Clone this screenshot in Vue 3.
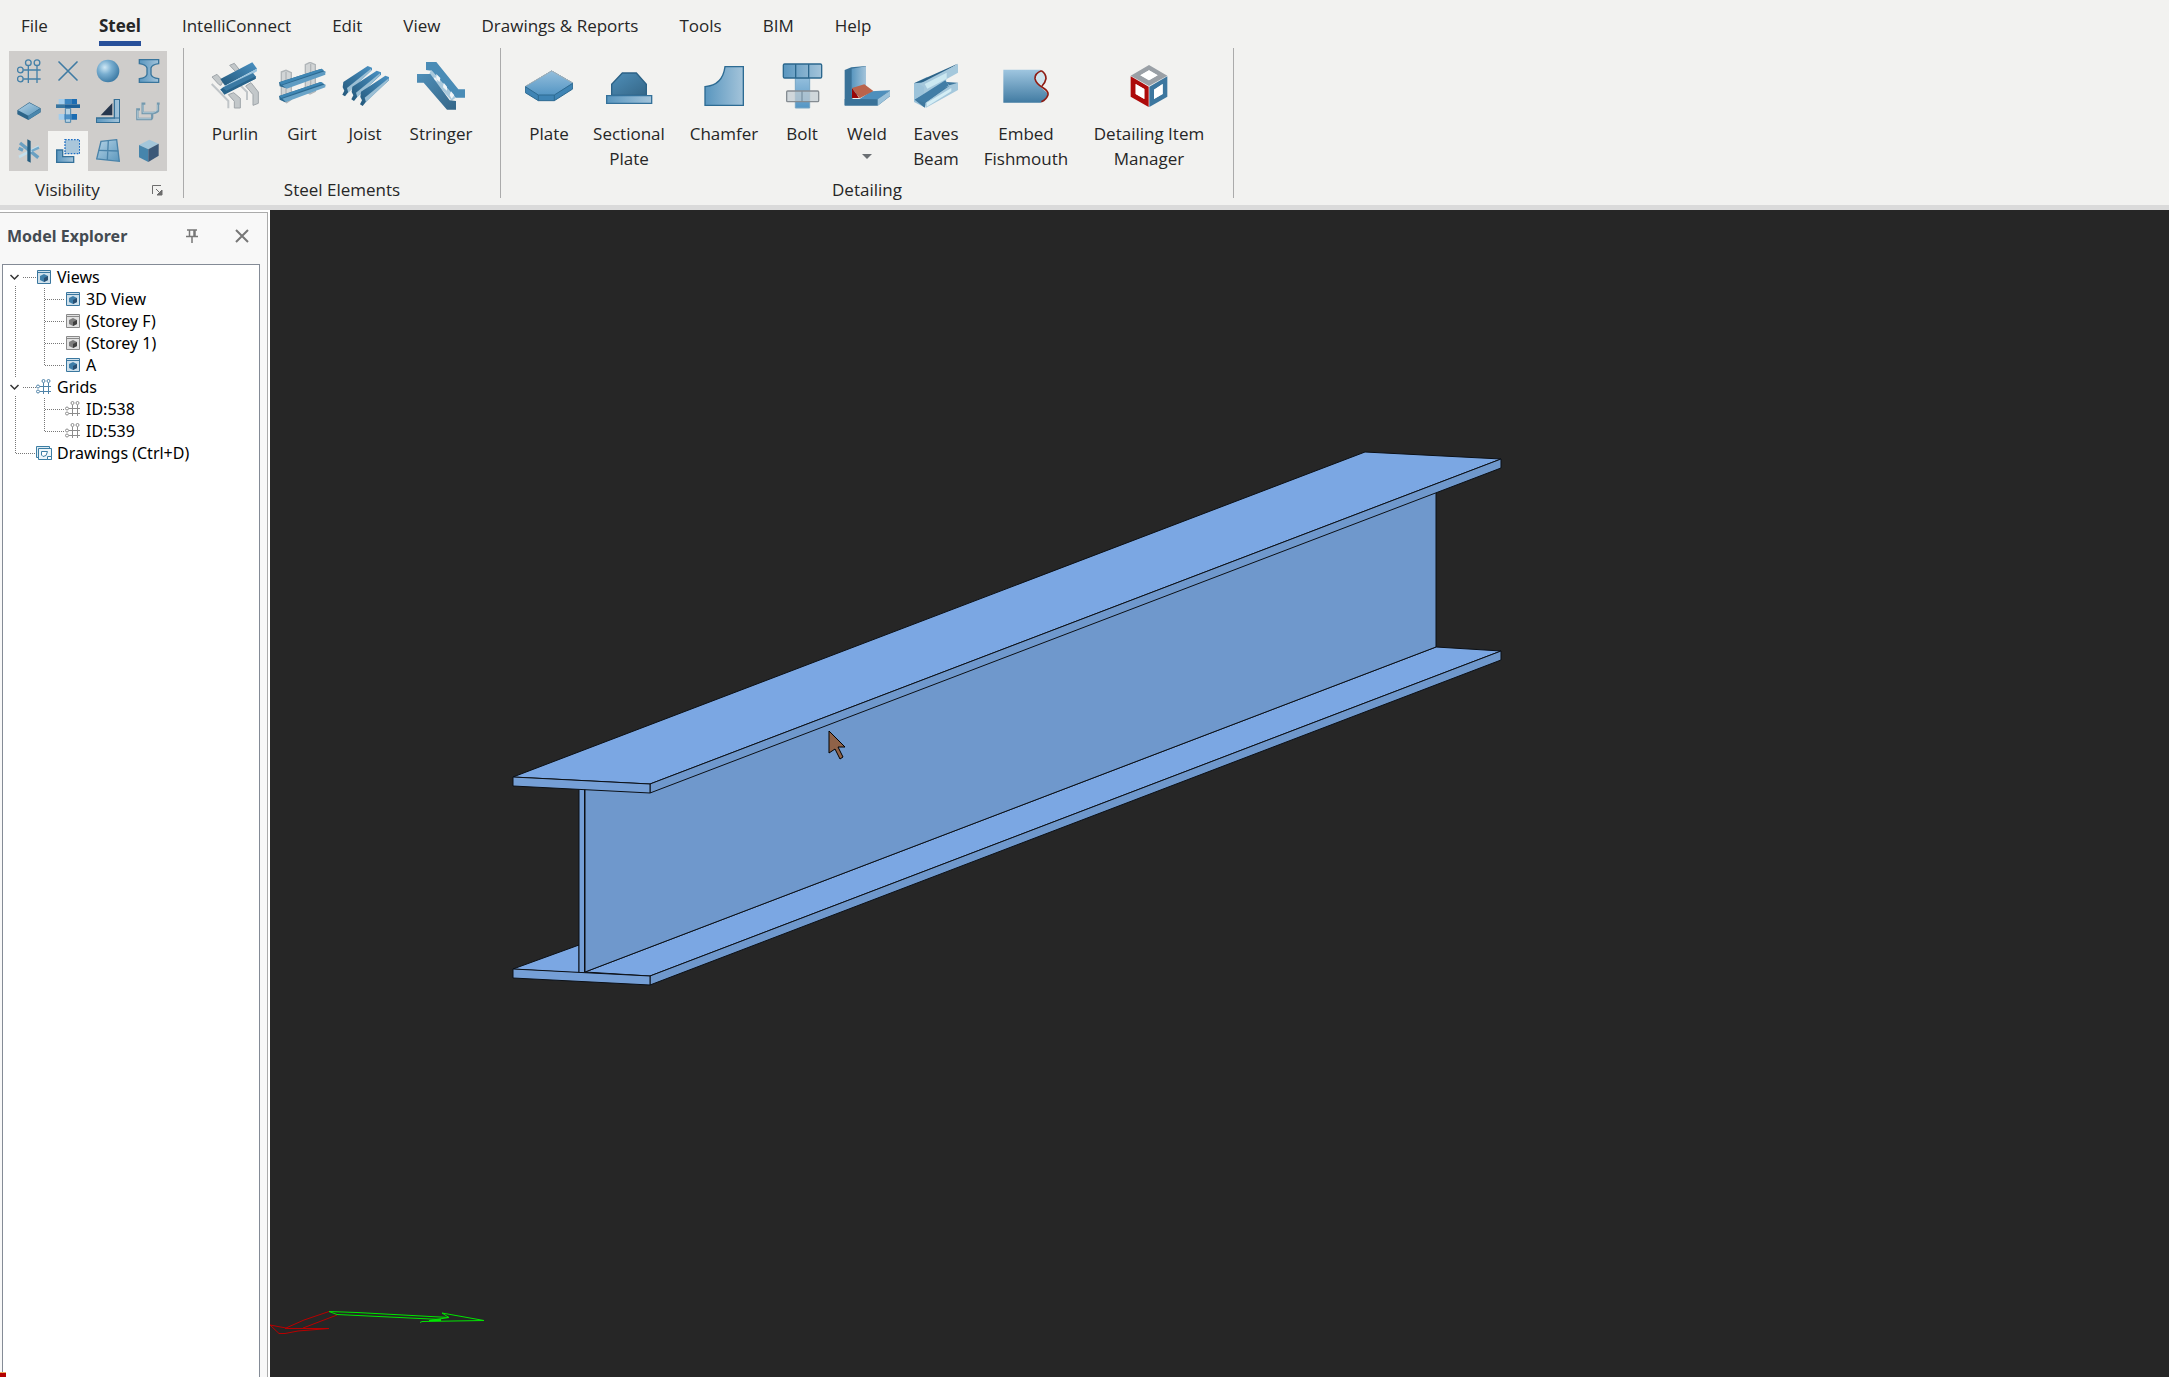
<script setup>
import { ref } from 'vue'

const activeTab = ref('Steel')
const tabs = ['Steel', 'IntelliConnect', 'Edit', 'View', 'Drawings & Reports', 'Tools', 'BIM', 'Help']

const visibility = ref([
  { id: 'grid', label: 'Grids' },
  { id: 'cross', label: 'Points' },
  { id: 'sphere', label: 'Nodes' },
  { id: 'ibeam', label: 'Members' },
  { id: 'slab', label: 'Plates' },
  { id: 'bolts', label: 'Bolts' },
  { id: 'haunch', label: 'Welds' },
  { id: 'channel', label: 'Cold formed' },
  { id: 'star', label: 'Axes' },
  { id: 'cut', label: 'Cuts', on: true },
  { id: 'panel', label: 'Panels' },
  { id: 'cube', label: 'Solids' },
])

const steelElements = [
  { id: 'purlin', lines: ['Purlin'] },
  { id: 'girt', lines: ['Girt'] },
  { id: 'joist', lines: ['Joist'] },
  { id: 'stringer', lines: ['Stringer'] },
]
const detailing = [
  { id: 'plate', lines: ['Plate'] },
  { id: 'sectional', lines: ['Sectional', 'Plate'] },
  { id: 'chamfer', lines: ['Chamfer'] },
  { id: 'bolt', lines: ['Bolt'] },
  { id: 'weld', lines: ['Weld'], menu: true },
  { id: 'eaves', lines: ['Eaves', 'Beam'] },
  { id: 'embed', lines: ['Embed', 'Fishmouth'] },
  { id: 'manager', lines: ['Detailing Item', 'Manager'] },
]

// guide: dotted connector lines of a row, width: gutter before the icon
const tree = [
  { text: 'Views', icon: 'view', open: true, width: 36, guide: 'M15.5 20V22M23 11.5H36' },
  { text: '3D View', icon: 'view', width: 65, guide: 'M15.5 0V22M44.5 0V22M45 11.5H65' },
  { text: '(Storey F)', icon: 'view-off', width: 65, guide: 'M15.5 0V22M44.5 0V22M45 11.5H65' },
  { text: '(Storey 1)', icon: 'view-off', width: 65, guide: 'M15.5 0V22M44.5 0V22M45 11.5H65' },
  { text: 'A', icon: 'view', width: 65, guide: 'M15.5 0V22M44.5 0V12M45 11.5H65' },
  { text: 'Grids', icon: 'gridnode', open: true, width: 36, guide: 'M15.5 0V2M15.5 20V22M23 11.5H36' },
  { text: 'ID:538', icon: 'gridnode-off', width: 65, guide: 'M15.5 0V22M44.5 0V22M45 11.5H65' },
  { text: 'ID:539', icon: 'gridnode-off', width: 65, guide: 'M15.5 0V22M44.5 0V12M45 11.5H65' },
  { text: 'Drawings (Ctrl+D)', icon: 'drawings', width: 36, guide: 'M15.5 0V12M16 11.5H36' },
]
</script>

<template>
  <div class="app">
    <svg class="sprite" width="0" height="0" aria-hidden="true">
      <defs>
        <linearGradient id="gLight" x1="0" y1="0" x2="1" y2="1">
          <stop offset="0" stop-color="#b5d3e6" /><stop offset="1" stop-color="#5b97bd" />
        </linearGradient>
        <linearGradient id="gSide" x1="0" y1="0" x2="1" y2="0">
          <stop offset="0" stop-color="#5996bf" /><stop offset="1" stop-color="#a4c4da" />
        </linearGradient>
        <linearGradient id="gDown" x1="0" y1="0" x2="0" y2="1">
          <stop offset="0" stop-color="#9fc6e0" /><stop offset="1" stop-color="#417ba2" />
        </linearGradient>
        <linearGradient id="gDark" x1="0" y1="0" x2="1" y2="1">
          <stop offset="0" stop-color="#4f8fb9" /><stop offset="1" stop-color="#356788" />
        </linearGradient>
        <linearGradient id="gBeam" x1="0" y1="1" x2="1" y2="0">
          <stop offset="0" stop-color="#24597c" /><stop offset="1" stop-color="#4a91c2" />
        </linearGradient>
        <linearGradient id="gPlate" x1="0" y1="0" x2="0" y2="1">
          <stop offset="0" stop-color="#93bedc" /><stop offset="1" stop-color="#5596c4" />
        </linearGradient>
        <radialGradient id="gBall" cx="0.36" cy="0.34" r="0.68">
          <stop offset="0" stop-color="#cfe8f5" /><stop offset="0.45" stop-color="#79aed0" /><stop offset="1" stop-color="#3f7ca6" />
        </radialGradient>
      </defs>

      <symbol id="i-grid" viewBox="0 0 72 72">
        <g fill="none" stroke="#4480a8" stroke-width="4">
          <path d="M19 33H71M19 60H71M34 20V72M60 20V72" />
          <circle cx="34" cy="11" r="8.5" /><circle cx="60" cy="11" r="8.5" />
          <circle cx="10" cy="33" r="8.5" /><circle cx="10" cy="60" r="8.5" />
        </g>
      </symbol>
      <symbol id="i-cross" viewBox="0 0 72 72">
        <path d="M9 9L63 63M63 9L9 63" stroke="#3f7ba3" stroke-width="5" stroke-linecap="round" />
      </symbol>
      <symbol id="i-sphere" viewBox="0 0 72 72"><circle cx="36" cy="36" r="34" fill="url(#gBall)" /></symbol>
      <symbol id="i-ibeam" viewBox="0 0 72 72">
        <path d="M10 2H68V14Q47 17 45 27V46Q47 56 68 59V70H10V59Q31 56 33 46V27Q31 17 10 14Z" fill="url(#gSide)" stroke="#39759c" stroke-width="4" />
      </symbol>
      <symbol id="i-slab" viewBox="0 0 72 72">
        <path d="M1 34L37 10L71 28V40L34 63L1 46Z" fill="#2d6589" />
        <path d="M3 34L37 12L69 28L34 50Z" fill="url(#gLight)" />
        <path d="M34 50L70 29V40L34 62Z" fill="#4a86ac" />
      </symbol>
      <symbol id="i-bolts" viewBox="0 0 72 72">
        <path d="M8 0H26V16H8ZM8 45H26V62H8Z" fill="#a3cdec" />
        <path d="M26 0H46V16H26ZM26 45H46V62H26Z" fill="#3b86c2" />
        <path d="M46 0H63V16H46ZM46 45H63V62H46Z" fill="#1b6cb2" />
        <path d="M0 16H27V27H0Z" fill="#3976a0" /><path d="M27 16H72V27H27Z" fill="#1d6199" />
        <path d="M28 28H44V70H28Z" fill="#b7d2e2" stroke="#4d85ab" stroke-width="3" />
        <path d="M26 46H46V61H26Z" fill="#3b86c2" opacity="0.85" />
      </symbol>
      <symbol id="i-haunch" viewBox="0 0 72 72">
        <path d="M14 49L49 12V49Z" fill="#26364d" />
        <path d="M55 1H71V71H1V57H55Z" fill="url(#gSide)" stroke="#356f96" stroke-width="4" />
        <path d="M55 57H71" stroke="#356f96" stroke-width="3" />
      </symbol>
      <symbol id="i-channel" viewBox="0 0 72 72">
        <g fill="none" stroke="#7499ae" stroke-width="7">
          <path d="M12 31H4V60H46Q50 58 48 45" /><path d="M28 14H20V42H52Q64 40 66 36V14H71" />
        </g>
        <path d="M5 34V59H45M21 17V41H52L64 34V17" fill="none" stroke="#b5ccd8" stroke-width="2.5" />
      </symbol>
      <symbol id="i-star" viewBox="0 0 72 72">
        <path d="M9 12L64 56M5 28L18 34" stroke="#6aa0c2" stroke-width="10" />
        <path d="M6 54L66 22" stroke="#c4dfec" stroke-width="8" /><path d="M44 36L66 26" stroke="#74a9c9" stroke-width="7" />
        <path d="M31 1L41 6V71L31 66Z" fill="#255d80" />
      </symbol>
      <symbol id="i-cut" viewBox="0 0 72 72">
        <path d="M27 2H71V44H27Z" fill="#a9c6da" stroke="#1e6fc4" stroke-width="4" stroke-dasharray="5 4" />
        <path d="M2 33H20V53H53V70H2Z" fill="url(#gSide)" stroke="#34719a" stroke-width="4" />
      </symbol>
      <symbol id="i-panel" viewBox="0 0 72 72">
        <path d="M15 7L62 2L70 67L2 60Z" fill="url(#gLight)" stroke="#4a83a9" stroke-width="4" />
        <path d="M37 4L34 63M8 34L67 36" stroke="#4a83a9" stroke-width="4" />
      </symbol>
      <symbol id="i-cube" viewBox="0 0 72 72">
        <path d="M9 18L40 2L68 14L37 31Z" fill="#a3c6da" /><path d="M9 18L37 31V69L9 55Z" fill="#4685ac" />
        <path d="M37 31L68 14V50L37 69Z" fill="#3b5878" />
      </symbol>

      <symbol id="i-purlin" viewBox="0 0 144 144">
        <g fill="#c3c8ca" stroke="#9fa5a9" stroke-width="3">
          <path d="M56 10L70 4L86 24L74 29Z" /><path d="M3 45L18 37L36 57L30 70L24 68Z" />
          <path d="M52 98L68 92L88 109V138H70V118Z" /><path d="M104 72L120 62L142 90V124L126 130V98Z" />
        </g>
        <path d="M2 66L20 84L52 117V139M88 70L108 90V114" fill="none" stroke="#c0c5c8" stroke-width="6" />
        <path d="M28 51L124 1L138 20L42 71Z" fill="url(#gBeam)" />
        <path d="M42 71L138 20V28L46 78Z" fill="#9cc5df" />
        <path d="M36 76L126 33L134 43V50L46 92L28 84Z" fill="#3a79a3" /><path d="M28 82L36 78L46 86L134 43V50L40 98Z" fill="#28638a" />
      </symbol>
      <symbol id="i-girt" viewBox="0 0 144 144">
        <g fill="#d2d5d6" stroke="#b0b5b8" stroke-width="4">
          <path d="M10 30L24 25L40 32V112L26 122L10 112Z" /><path d="M82 8L96 1L112 8V88L96 96L82 88Z" />
          <path d="M24 30V116M98 6V92" fill="none" />
        </g>
        <path d="M3 61L130 20L143 31L22 78L5 73Z" fill="#2d6a91" /><path d="M13 70L142 27V38L26 80Z" fill="#5f9cc3" /><path d="M4 61L130 20L138 25L10 68Z" fill="#3f87b5" />
        <path d="M3 102L128 60L143 70L20 120L5 113Z" fill="#2d6a91" /><path d="M13 110L142 67V76L24 120Z" fill="#6aa4c8" /><path d="M4 102L128 60L138 64L10 108Z" fill="#3f87b5" />
      </symbol>
      <symbol id="i-joist" viewBox="0 0 144 144">
        <g>
          <path d="M7 60L80 12L93 17V24L24 88L12 103L4 98L10 86L5 76Z" fill="url(#gBeam)" /><path d="M18 78L90 20V26L22 92Z" fill="#9bbfd4" />
        </g>
        <g transform="translate(27 14)">
          <path d="M7 60L80 12L93 17V24L24 88L12 103L4 98L10 86L5 76Z" fill="url(#gBeam)" /><path d="M18 78L90 20V26L22 92Z" fill="#9bbfd4" />
        </g>
        <g transform="translate(53 29)">
          <path d="M7 60L80 12L93 17V24L24 88L12 103L4 98L10 86L5 76Z" fill="url(#gBeam)" /><path d="M18 78L90 20V26L22 92Z" fill="#9bbfd4" />
        </g>
      </symbol>
      <symbol id="i-stringer" viewBox="0 0 144 144">
        <path d="M27 0H58L124 82H144V107H116L44 26L27 24Z" fill="#4a8cb6" />
        <path d="M42 24L116 107L104 116L36 38Z" fill="#a9c9dc" />
        <path d="M54 44L62 60L50 52ZM58 36L70 48L68 60L58 52ZM80 62L90 74V86L78 76ZM102 88L112 100L104 110L98 100Z" fill="#f2f6f8" />
        <path d="M0 36H40L98 115L117 117V143H90L20 62H0Z" fill="url(#gDark)" />
      </symbol>
      <symbol id="i-plate" viewBox="0 0 144 144">
        <path d="M1 74L80 27L143 63V81L88 116H40L1 92Z" fill="#3f84b4" stroke="#2e6a91" stroke-width="3" />
        <path d="M1 74L80 27L143 63L88 99H40Z" fill="url(#gPlate)" /><path d="M1 73L80 27L143 63" fill="none" stroke="#a7b3ba" stroke-width="3" />
        <path d="M1 74L40 99H88L143 64M40 99V116M88 99V116" fill="none" stroke="#2e6a91" stroke-width="3" />
      </symbol>
      <symbol id="i-sectional" viewBox="0 0 144 144">
        <path d="M20 100V67L52 33H94L124 67V100Z" fill="url(#gDark)" stroke="#2c6286" stroke-width="4" />
        <path d="M5 101H140V124H5Z" fill="url(#gSide)" stroke="#34719a" stroke-width="4" />
      </symbol>
      <symbol id="i-chamfer" viewBox="0 0 144 144">
        <path d="M15 130V74Q68 70 75 14H130V130Z" fill="url(#gSide)" stroke="#2d6b93" stroke-width="4" />
      </symbol>
      <symbol id="i-bolt" viewBox="0 0 144 144">
        <path d="M52 49H95V138H52Z" fill="url(#gPlate)" stroke="#76a5c4" stroke-width="3" />
        <rect x="16" y="6" width="115" height="42" rx="4" fill="url(#gSide)" stroke="#2b678d" stroke-width="4" />
        <path d="M53 6V48M92 6V48" stroke="#2b678d" stroke-width="4" />
        <rect x="26" y="87" width="96" height="32" rx="3" fill="#c2ccd2" fill-opacity="0.7" stroke="#858c92" stroke-width="4" />
        <path d="M72 88V118" stroke="#6c8596" stroke-width="3" />
      </symbol>
      <symbol id="i-weld" viewBox="0 0 144 144">
        <path d="M5 24L25 16L69 12V85L27 110L5 130Z" fill="#3a7298" /><path d="M26 20L69 13V80L26 98Z" fill="url(#gSide)" />
        <path d="M5 111H100L141 85V103L104 131H5Z" fill="#3a7298" /><path d="M50 111L84 88L141 85L104 112Z" fill="#4e8fbc" />
        <path d="M104 112L141 86V102L104 131Z" fill="#9bc2da" />
        <path d="M27 78L48 108H27Z" fill="#9a0606" /><path d="M27 78L64 67L91 87L50 109Z" fill="#ba634b" />
      </symbol>
      <symbol id="i-eaves" viewBox="0 0 144 144">
        <path d="M6 64L46 44V82L40 137L6 120Z" fill="#9cc3da" /><path d="M6 64L130 8L138 5L48 60Z" fill="#2c6388" />
        <path d="M8 113L104 60L138 62L42 122L38 137Z" fill="#3f789e" />
        <path d="M22 66L138 6V32L104 51Q98 58 112 70L138 62V84L42 137L40 122L112 72L36 98V76Z" fill="#a5c8dc" />
        <path d="M8 113L100 55L110 70L40 122Z" fill="#417da6" />
        <path d="M38 66L104 32V50L46 80Z" fill="#cbe8f1" /><path d="M44 122L118 78V88L44 134Z" fill="#d5eef5" />
      </symbol>
      <symbol id="i-embed" viewBox="0 0 144 144">
        <path d="M4 23H116Q90 50 104 64L139 96Q130 118 116 122H4Z" fill="url(#gDown)" />
        <ellipse cx="116" cy="48" rx="14" ry="20" fill="#cfe3ec" />
        <path d="M118 26Q98 34 99 50Q102 66 124 78Q140 88 138 98Q134 112 118 119M118 26Q132 34 132 50Q130 62 120 72" fill="none" stroke="#8e1d14" stroke-width="5" />
      </symbol>
      <symbol id="i-manager" viewBox="0 0 144 144">
        <path fill-rule="evenodd" d="M72 9L127 41L72 72L17 41ZM72 25L46 40L72 55L98 40Z" fill="#9aa0a6" />
        <path fill-rule="evenodd" d="M17 43L71 74V135L17 104ZM32 66V96L58 111V81Z" fill="#ad0b0b" />
        <path fill-rule="evenodd" d="M73 74L127 43V104L73 135ZM87 83V111L113 96V66Z" fill="#3d779f" />
        <path d="M32 66L58 81V111L32 96ZM113 66L87 83V111L113 96ZM72 25L98 40L72 55L46 40Z" fill="#fff" />
      </symbol>

      <symbol id="i-view" viewBox="0 0 14 14">
        <path d="M0.5 0.5H13.5V13.5H0.5Z" fill="#cfe0eb" stroke="#3a779f" /><path d="M1 2.5H13" stroke="#3a779f" />
        <path d="M3 6L7 4L11 6V10L7 12L3 10Z" fill="#3f7ea8" /><path d="M7 8L11 6V10L7 12Z" fill="#2a4f72" />
      </symbol>
      <symbol id="i-view-off" viewBox="0 0 14 14">
        <path d="M0.5 0.5H13.5V13.5H0.5Z" fill="#e2e2e2" stroke="#8a8a8a" /><path d="M1 2.5H13" stroke="#8a8a8a" />
        <path d="M3 6L7 4L11 6V10L7 12L3 10Z" fill="#7d7d7d" /><path d="M7 8L11 6V10L7 12Z" fill="#3f3f3f" />
      </symbol>
      <symbol id="i-gridnode" viewBox="0 0 16 16">
        <g fill="none" stroke="#4f83a8"><path d="M4 7.5H15M4 12.5H15M7.5 4V15M12.5 4V15" /><circle cx="7.5" cy="2" r="1.5" /><circle cx="12.5" cy="2" r="1.5" /><circle cx="2" cy="7.5" r="1.5" /><circle cx="2" cy="12.5" r="1.5" /></g>
      </symbol>
      <symbol id="i-gridnode-off" viewBox="0 0 16 16">
        <g fill="none" stroke="#8c8c8c"><path d="M4 7.5H15M4 12.5H15M7.5 4V15M12.5 4V15" /><circle cx="7.5" cy="2" r="1.5" /><circle cx="12.5" cy="2" r="1.5" /><circle cx="2" cy="7.5" r="1.5" /><circle cx="2" cy="12.5" r="1.5" /></g>
      </symbol>
      <symbol id="i-drawings" viewBox="0 0 16 14">
        <path d="M0.5 0.5H13.5V11.5H0.5Z" fill="#dcebf3" stroke="#3d7ea4" /><path d="M2.5 2.5H15.5V13.5H2.5Z" fill="#eef6fa" stroke="#3d7ea4" />
        <path d="M5.5 5.5H11.5L10 9.5L7 10.5L5.5 9Z" fill="#fff" stroke="#3d7ea4" /><path d="M11.5 10.5H15.5V13.5H11.5Z" fill="#fff" stroke="#3d7ea4" />
      </symbol>
    </svg>

    <header class="ribbon">
      <nav class="tabs">
        <button type="button" class="tab file">File</button>
        <button v-for="t in tabs" :key="t" type="button" class="tab" :class="{ active: t === activeTab }" @click="activeTab = t">{{ t }}</button>
      </nav>

      <div class="groups">
        <section class="group visibility">
          <div class="palette">
            <button v-for="v in visibility" :key="v.id" type="button" :aria-label="v.label" :aria-pressed="!!v.on" :class="{ on: v.on }" @click="v.on = !v.on">
              <svg width="24" height="24"><use :href="'#i-' + v.id" /></svg>
            </button>
          </div>
          <div class="caption">
            <span>Visibility</span>
            <button type="button" class="launcher" aria-label="Visibility options">
              <svg width="11" height="11" viewBox="0 0 11 11"><path d="M0.5 9V0.5H9" fill="none" stroke="#6d6d6d" /><path d="M4 4L9 9M10 5V10H5Z" fill="#6d6d6d" stroke="#6d6d6d" /></svg>
            </button>
          </div>
        </section>

        <section class="group steel">
          <div class="items">
            <button v-for="b in steelElements" :key="b.id" type="button" class="item">
              <svg width="48" height="48"><use :href="'#i-' + b.id" /></svg>
              <span v-for="l in b.lines" :key="l">{{ l }}</span>
            </button>
          </div>
          <div class="caption">Steel Elements</div>
        </section>

        <section class="group detailing">
          <div class="items">
            <button v-for="b in detailing" :key="b.id" type="button" class="item">
              <svg width="48" height="48"><use :href="'#i-' + b.id" /></svg>
              <span v-for="l in b.lines" :key="l">{{ l }}</span>
              <svg v-if="b.menu" class="arrow" width="10" height="5" viewBox="0 0 10 5"><path d="M0 0H10L5 5Z" fill="#6b6f73" /></svg>
            </button>
          </div>
          <div class="caption">Detailing</div>
        </section>
      </div>
    </header>

    <main class="work">
      <aside class="explorer">
        <div class="head">
          <h2>Model Explorer</h2>
          <button type="button" aria-label="Pin panel">
            <svg width="12" height="14" viewBox="0 0 12 14"><path d="M1 1H11M3.5 1V7M8 1V7M9 1V7M0 7.5H12M6 8V14" fill="none" stroke="#777" stroke-width="1.5" /></svg>
          </button>
          <button type="button" aria-label="Close panel">
            <svg width="14" height="14" viewBox="0 0 14 14"><path d="M1 1L13 13M13 1L1 13" stroke="#777" stroke-width="2" /></svg>
          </button>
        </div>
        <ul class="tree">
          <li v-for="n in tree" :key="n.text">
            <svg :width="n.width" height="22">
              <path :d="n.guide" class="dots" />
              <path v-if="n.open" d="M10.5 9L14.5 13L18.5 9" fill="none" stroke="#333" stroke-width="1.5" />
            </svg>
            <svg class="node" width="16" :height="n.icon.startsWith('grid') ? 16 : 14"><use :href="'#i-' + n.icon" /></svg>
            <span>{{ n.text }}</span>
          </li>
        </ul>
        <span class="marker"></span>
      </aside>

      <div class="viewport">
        <svg class="scene" viewBox="0 0 1899 1167" role="img" aria-label="3D view">
          <g stroke="#0b0f15" stroke-width="1" stroke-linejoin="round">
            <path d="M243 759L309 735V763Z" fill="#7ba7e3" />
            <path d="M315 762L1166 437L1231 441L380 766Z" fill="#7ba7e3" />
            <path d="M380 766L1231 441V450L380 775Z" fill="#6f98cc" />
            <path d="M243 759L380 766V775L243 768Z" fill="#759fd6" />
            <path d="M315 579L1166 254V437L315 762Z" fill="#6f98cc" />
            <path d="M309 577H315V762H309Z" fill="#759fd6" stroke="none" />
            <path d="M309 577V762M314.500 577V762" fill="none" />
            <path d="M243 567L1095 242L1231 249L380 574Z" fill="#7ba7e3" />
            <path d="M380 574L1231 249V258L380 583Z" fill="#6f98cc" />
            <path d="M243 567L380 574V583L243 576Z" fill="#759fd6" />
          </g>
          <g fill="none" stroke="#b80000" stroke-width="1">
            <path d="M0 1115L16 1118L34 1110L59 1101.500M67 1105L33 1118M15 1118.500H59L28 1121L15 1123.500H9L0 1115" />
          </g>
          <g fill="none" stroke="#00e600" stroke-width="1">
            <path d="M59 1101.500L87 1102.500L179 1107.500M59 1101.500L67 1104.500L171 1109.500M172 1103L214 1110.500L152 1111.500L150 1112.500M172 1103L179 1107.500L159 1110.500H171" />
          </g>
          <path d="M559 521L575 537L568 537L573 547L570 549L565 539L559 543Z" fill="#8f6248" stroke="#000" stroke-width="1" />
        </svg>
      </div>
    </main>
  </div>
</template>

<style>
body { margin: 0; }
</style>

<style scoped>
.app {
  display: flex;
  flex-direction: column;
  min-height: 100vh;
  background: #f2f2f0;
  color: #262626;
  font: 17px/25px "Open Sans", "Noto Sans", sans-serif;
}
.sprite { position: absolute; }
button {
  margin: 0;
  padding: 0;
  border: 0;
  background: none;
  color: inherit;
  font: inherit;
}
svg { display: block; flex: none; }

.ribbon {
  background: #f2f2f0;
  border-bottom: 5px solid #dadada;
}
.tabs {
  display: flex;
  gap: 41px;
  height: 48px;
  padding-left: 21px;
}
.tab {
  height: 46px;
  padding-top: 10px;
  box-sizing: border-box;
  border-bottom: 5px solid transparent;
  white-space: nowrap;
}
.tab.file { margin-right: 10px; }
.tab.active { font-weight: 700; border-bottom-color: #28509a; }

.groups { display: flex; height: 157px; }
.group {
  display: flex;
  flex-direction: column;
  justify-content: space-between;
  height: 150px;
  border-right: 1px solid #ababab;
}
.palette {
  display: grid;
  grid-template-columns: 39px 40px 40px 39px;
  grid-auto-rows: 40px;
  margin: 3px 16px 0 9px;
  background: #cfcdcb;
}
.palette button { display: grid; place-items: center; }
.palette .on { background: #f2f2f0; }
.caption { height: 15px; line-height: 14px; text-align: center; }
.visibility .caption {
  display: flex;
  justify-content: space-between;
  padding: 0 20px 0 35px;
}
.launcher { display: grid; place-items: center; width: 11px; height: 14px; }
.items { display: grid; justify-content: center; }
.steel .items { grid-template-columns: 68px 66px 60px 92px; padding: 0 13px 0 17px; }
.detailing .items { grid-template-columns: 68px 92px 98px 58px 72px 66px 114px 132px; padding: 0 18px 0 14px; }
.item {
  display: flex;
  flex-direction: column;
  align-items: center;
  padding-top: 14px;
  white-space: nowrap;
}
.item svg + span { margin-top: 11px; }
.arrow { margin-top: 8px; }

.work { display: flex; flex: 1; }
.explorer {
  position: relative;
  display: flex;
  flex-direction: column;
  width: 270px;
  box-sizing: border-box;
  border: solid #fff;
  border-width: 2px 2px 0 0;
  background: #f8f8f8;
  box-shadow: inset -1px 1px 0 #ababab;
  font: 16px/22px "Noto Sans", "Open Sans", sans-serif;
}
.head {
  display: flex;
  align-items: center;
  height: 48px;
  padding: 0 19px 0 7px;
}
h2 { flex: 1; margin: 0; font: 700 16px/22px "Noto Sans", "Open Sans", sans-serif; color: #444b52; }
.head button { margin-left: 37px; }
.tree {
  flex: 1;
  margin: 4px 8px 0 2px;
  padding: 1px 0 0;
  border: solid #848b96;
  border-width: 1px 1px 0 1px;
  background: #fff;
  color: #000;
  list-style: none;
}
.tree li { display: flex; align-items: center; height: 22px; margin-left: -3px; }
.dots { stroke: #777; stroke-dasharray: 1 1; fill: none; shape-rendering: crispEdges; }
.node { margin-right: 5px; }
.marker {
  position: absolute;
  left: 0;
  bottom: 0;
  width: 6px;
  height: 4px;
  background: #b40000;
  border-top: 1px solid #eaa860;
}
.viewport { position: relative; flex: 1; background: #262626; overflow: hidden; }
.scene { position: absolute; inset: 0; width: 100%; height: 100%; }
</style>
